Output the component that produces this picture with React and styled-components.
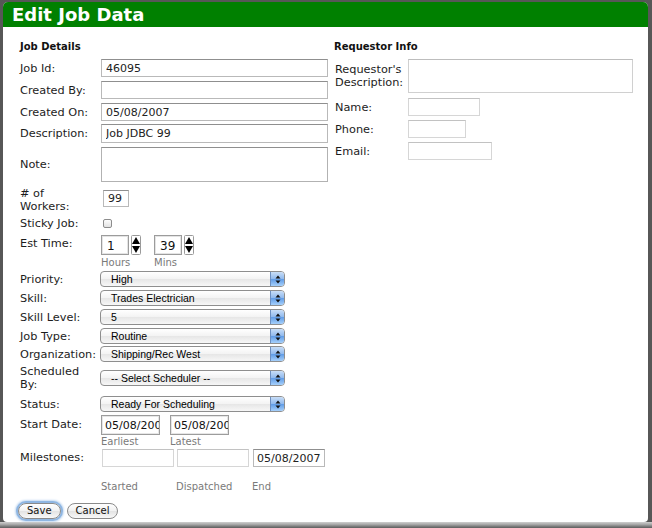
import styled, { createGlobalStyle } from "styled-components";

const GlobalStyle = createGlobalStyle`
  html, body {
    margin: 0;
    padding: 0;
    background: #575757;
  }
  body {
    font-family: "DejaVu Sans", Verdana, sans-serif;
  }
  * {
    box-sizing: border-box;
  }
`;

function StepArrows() {
  return (
    <svg width="10" height="20" viewBox="0 0 10 20">
      <rect x="0.5" y="0.5" width="9" height="19" rx="1" fill="#fff" stroke="#9a9a9a" />
      <polygon points="5,2 9,9 1,9" fill="#000" />
      <polygon points="1,11 9,11 5,18" fill="#000" />
    </svg>
  );
}

function CapArrows() {
  return (
    <svg width="6" height="9" viewBox="0 0 6 9">
      <polygon points="3,0.5 5.5,3.5 0.5,3.5" fill="#111" />
      <polygon points="0.5,5.5 5.5,5.5 3,8.5" fill="#111" />
    </svg>
  );
}

function Select({ value, $w = 185 }) {
  return (
    <SelectBox $w={$w}>
      <SelectText>{value}</SelectText>
      <SelectCap>
        <CapArrows />
      </SelectCap>
    </SelectBox>
  );
}

function Spinner({ value, unit }) {
  return (
    <SpinGroup>
      <SpinRow>
        <SpinBox>{value}</SpinBox>
        <StepArrows />
      </SpinRow>
      <SubLabel $mt={2}>{unit}</SubLabel>
    </SpinGroup>
  );
}

export default function App() {
  return (
    <Screen>
      <GlobalStyle />
      <Window>
        <TitleBar>Edit Job Data</TitleBar>
        <Body>
          <LeftCol>
            <Heading>Job Details</Heading>

            <Row $mt={6}>
              <Label>Job Id:</Label>
              <TextInput $w={227} defaultValue="46095" />
            </Row>
            <Row $mt={4}>
              <Label>Created By:</Label>
              <TextInput $w={227} defaultValue="" />
            </Row>
            <Row $mt={4}>
              <Label>Created On:</Label>
              <TextInput $w={227} defaultValue="05/08/2007" />
            </Row>
            <Row $mt={3}>
              <Label>Description:</Label>
              <TextInput $w={227} $h={19} defaultValue="Job JDBC 99" />
            </Row>
            <Row $mt={4}>
              <Label>Note:</Label>
              <TextArea $w={227} $h={35} />
            </Row>
            <Row $mt={5} $align="flex-start">
              <Label>
                # of
                <br />
                Workers:
              </Label>
              <SmallInput defaultValue="99" />
            </Row>
            <Row $mt={4}>
              <Label>Sticky Job:</Label>
              <CheckBox />
            </Row>
            <Row $mt={5} $align="flex-start">
              <Label $lh={17}>Est Time:</Label>
              <Spinner value="1" unit="Hours" />
              <Spacer $w={13} />
              <Spinner value="39" unit="Mins" />
            </Row>

            <Row $mt={2}>
              <Label>Priority:</Label>
              <Select value="High" />
            </Row>
            <Row $mt={3}>
              <Label>Skill:</Label>
              <Select value="Trades Electrician" />
            </Row>
            <Row $mt={3}>
              <Label>Skill Level:</Label>
              <Select value="5" />
            </Row>
            <Row $mt={3}>
              <Label>Job Type:</Label>
              <Select value="Routine" />
            </Row>
            <Row $mt={2}>
              <Label>Organization:</Label>
              <Select value="Shipping/Rec West" />
            </Row>
            <Row $mt={3}>
              <Label>
                Scheduled
                <br />
                By:
              </Label>
              <Select value="-- Select Scheduler --" />
            </Row>
            <Row $mt={5}>
              <Label>Status:</Label>
              <Select value="Ready For Scheduling" />
            </Row>

            <Row $mt={3} $align="flex-start">
              <Label $lh={14} $pt={3}>Start Date:</Label>
              <DateGroup>
                <DateInput defaultValue="05/08/2007" />
                <SubLabel $mt={1}>Earliest</SubLabel>
              </DateGroup>
              <Spacer $w={10} />
              <DateGroup>
                <DateInput defaultValue="05/08/2007" />
                <SubLabel $mt={1}>Latest</SubLabel>
              </DateGroup>
            </Row>

            <Row $mt={1} $align="flex-start">
              <Label $lh={18}>Milestones:</Label>
              <MileGroup $ml={1}>
                <TextInput $w={72} $light />
                <MileLabel>Started</MileLabel>
              </MileGroup>
              <MileGroup $ml={3}>
                <TextInput $w={72} $light />
                <MileLabel>Dispatched</MileLabel>
              </MileGroup>
              <MileGroup $ml={4}>
                <TextInput $w={72} $pad={3} defaultValue="05/08/2007" />
                <MileLabel>End</MileLabel>
              </MileGroup>
            </Row>

            <ButtonRow>
              <Button $focused>Save</Button>
              <Button>Cancel</Button>
            </ButtonRow>
          </LeftCol>

          <RightCol>
            <Heading>Requestor Info</Heading>
            <Row $mt={6}>
              <Label $w={74} $pl={1}>
                Requestor's
                <br />
                Description:
              </Label>
              <TextArea $w={225} $h={34} $light />
            </Row>
            <Row $mt={5}>
              <Label $w={74} $pl={1}>Name:</Label>
              <TextInput $w={72} $light />
            </Row>
            <Row $mt={4}>
              <Label $w={74} $pl={1}>Phone:</Label>
              <TextInput $w={58} $light />
            </Row>
            <Row $mt={4}>
              <Label $w={74} $pl={1}>Email:</Label>
              <TextInput $w={84} $light />
            </Row>
          </RightCol>
        </Body>
      </Window>
      <BottomShadow />
    </Screen>
  );
}

const Screen = styled.div`
  width: 652px;
  height: 528px;
  overflow: hidden;
  background: #575757;
  padding: 2px 4px 0 3px;
  display: flex;
  flex-direction: column;
`;

const Window = styled.div`
  height: 520px;
  background: #fff;
  border-radius: 5px 5px 4px 4px;
  overflow: hidden;
  display: flex;
  flex-direction: column;
`;

const BottomShadow = styled.div`
  height: 6px;
  margin: 0 -4px 0 -3px;
  background: linear-gradient(#cfcfcf, #a9a9a9 40%, #7a7a7a 75%, #5e5e5e);
`;

const TitleBar = styled.div`
  height: 25px;
  flex-shrink: 0;
  background: #008000;
  color: #fff;
  font-weight: bold;
  font-size: 18px;
  padding-left: 9px;
  display: flex;
  align-items: center;
`;

const Body = styled.div`
  display: flex;
  padding: 14px 0 0 17px;
`;

const LeftCol = styled.div`
  width: 308px;
  display: flex;
  flex-direction: column;
`;

const RightCol = styled.div`
  width: 300px;
  margin-left: 6px;
  display: flex;
  flex-direction: column;
`;

const Heading = styled.div`
  font-size: 10px;
  font-weight: bold;
  line-height: 12px;
  color: #111;
`;

const Row = styled.div`
  display: flex;
  align-items: ${({ $align }) => $align || "center"};
  margin-top: ${({ $mt }) => $mt || 0}px;
`;

const Label = styled.div`
  width: ${({ $w }) => $w || 81}px;
  flex-shrink: 0;
  padding-left: ${({ $pl }) => $pl || 0}px;
  padding-top: ${({ $pt }) => $pt || 0}px;
  font-size: 11.3px;
  line-height: ${({ $lh }) => $lh || 13}px;
  color: #1c1c1c;
`;

const TextInput = styled.input`
  width: ${({ $w }) => $w}px;
  height: ${({ $h }) => $h || 18}px;
  margin: 0;
  padding: 0 ${({ $pad }) => $pad || 4}px;
  border: 1px solid ${({ $light }) => ($light ? "#d6d6d6" : "#b9b9b9")};
  border-top-color: ${({ $light }) => ($light ? "#c2c2c2" : "#8f8f8f")};
  background: #fff;
  font-family: inherit;
  font-size: 11px;
  color: #222;
  outline: none;
`;

const TextArea = styled.div`
  width: ${({ $w }) => $w}px;
  height: ${({ $h }) => $h}px;
  border: 1px solid ${({ $light }) => ($light ? "#d0d0d0" : "#b2b2b2")};
  border-top-color: ${({ $light }) => ($light ? "#bdbdbd" : "#8f8f8f")};
  background: #fff;
`;

const SmallInput = styled.input`
  width: 26px;
  height: 17px;
  margin: 3px 0 0 2px;
  padding: 0 4px;
  border: 1px solid #b9b9b9;
  border-top-color: #8f8f8f;
  font-family: inherit;
  font-size: 11px;
  color: #222;
  outline: none;
`;

const CheckBox = styled.span`
  width: 9px;
  height: 9px;
  margin-left: 2px;
  border: 1px solid #8c8c8c;
  border-radius: 2px;
  background: linear-gradient(#fdfdfd, #e2e2e2);
`;

const Spacer = styled.div`
  width: ${({ $w }) => $w}px;
  flex-shrink: 0;
`;

const SpinGroup = styled.div`
  display: flex;
  flex-direction: column;
`;

const SpinRow = styled.div`
  display: flex;
  align-items: flex-start;
  gap: 2px;
`;

const SpinBox = styled.div`
  width: 28px;
  height: 20px;
  padding: 2px 0 0 5px;
  border: 1px solid #9c9c9c;
  box-shadow: inset 0 0 0 1px #e4e4e4;
  font-size: 12px;
  line-height: 16px;
  color: #111;
`;

const SubLabel = styled.div`
  margin-top: ${({ $mt }) => $mt || 0}px;
  font-size: 10px;
  line-height: 12px;
  color: #7a7a7a;
`;

const SelectBox = styled.div`
  width: ${({ $w }) => $w}px;
  height: 16px;
  margin-left: -1px;
  display: flex;
  border: 1px solid #8e8e8e;
  border-radius: 4px;
  overflow: hidden;
  background: linear-gradient(#ffffff, #f3f3f3 50%, #e6e6e6 51%, #f7f7f7);
`;

const SelectText = styled.div`
  flex: 1;
  padding-left: 10px;
  font-family: "Liberation Sans", Arial, sans-serif;
  font-size: 10.5px;
  line-height: 14px;
  color: #000;
  white-space: nowrap;
  overflow: hidden;
`;

const SelectCap = styled.div`
  width: 14px;
  flex-shrink: 0;
  display: flex;
  align-items: center;
  justify-content: center;
  border-left: 1px solid #6d8fc0;
  background: linear-gradient(#c9def7, #8fb9ee 50%, #5f9be6 51%, #a6d0fb);
`;

const DateGroup = styled.div`
  display: flex;
  flex-direction: column;
`;

const DateInput = styled.input`
  width: 59px;
  height: 20px;
  margin: 0;
  padding: 0 0 0 3px;
  border: 1px solid #9c9c9c;
  box-shadow: inset 0 0 0 1px #e6e6e6;
  font-family: inherit;
  font-size: 11px;
  color: #111;
  outline: none;
`;

const MileGroup = styled.div`
  display: flex;
  flex-direction: column;
  margin-left: ${({ $ml }) => $ml}px;
`;

const MileLabel = styled(SubLabel)`
  margin: 14px 0 0 -1px;
`;

const ButtonRow = styled.div`
  display: flex;
  gap: 6px;
  margin: 10px 0 0 -2px;
`;

const Button = styled.button`
  height: 16px;
  padding: 0 8px;
  border: 1px solid #8a8a8a;
  border-radius: 8px;
  background: linear-gradient(#ffffff, #f1f1f1 50%, #e3e3e3 51%, #f8f8f8);
  font-family: inherit;
  font-size: 10px;
  line-height: 14px;
  color: #111;
  box-shadow: ${({ $focused }) =>
    $focused ? "0 0 0 2px #8fb6e2, 0 0 2px 3px #c4daf2" : "none"};
`;
